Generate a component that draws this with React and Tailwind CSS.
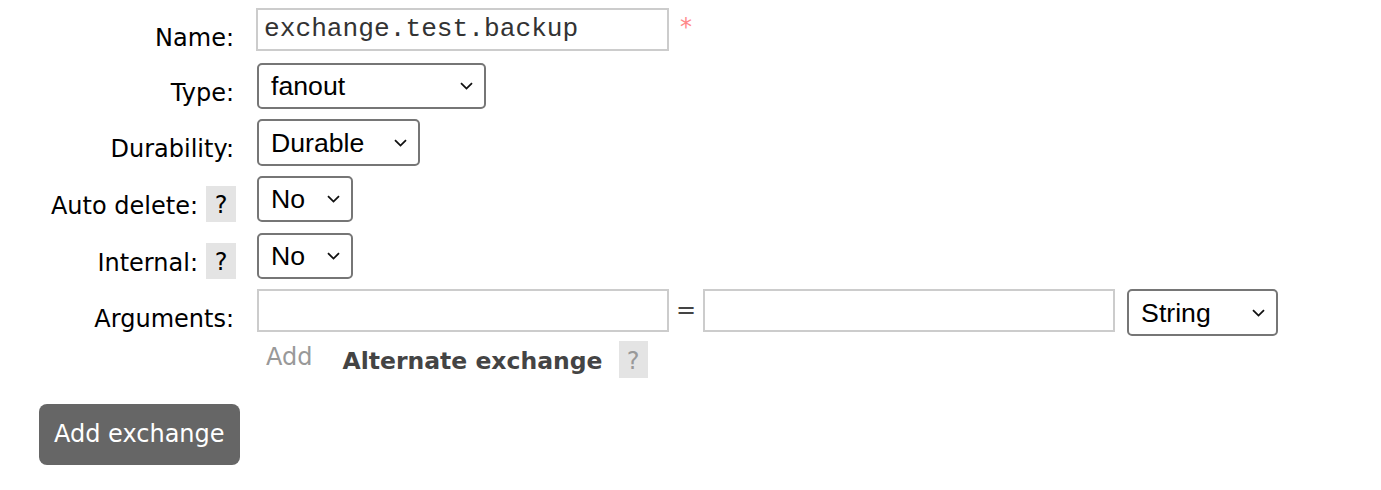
const LABEL = "text-[24px] leading-[27px] text-black";
const FONT = { fontFamily: '"DejaVu Sans", Verdana, sans-serif' };

function Chevron() {
  return (
    <svg width="13" height="8" viewBox="0 0 13 8" fill="none" className="shrink-0">
      <path d="M1 1.2 L6.5 6.6 L12 1.2" stroke="#111" strokeWidth="1.8" />
    </svg>
  );
}

function Select({ value, width, height = "h-[46px]" }) {
  return (
    <div
      className={`${width} ${height} flex items-center justify-between pl-[12px] pr-[11px] border-2 border-[#767676] rounded-[5px] bg-white text-[26.67px] text-black`}
      style={{ fontFamily: '"Liberation Sans", Arial, sans-serif' }}
    >
      <span>{value}</span>
      <Chevron />
    </div>
  );
}

function Help() {
  return (
    <div className="w-[30px] h-[36px] flex justify-center pt-[6px] bg-[#e4e4e4] text-[24px] leading-[27px] text-black">
      ?
    </div>
  );
}

function Row({ label, help, className, children }) {
  return (
    <div className={`flex items-start ${className}`}>
      <div className="w-[197px] flex justify-end items-start">
        <span className={`${LABEL} pt-[17px] ${help ? "" : "pr-[2px]"}`}>{label}</span>
        {help && (
          <div className="ml-[8px] mt-[10px]">
            <Help />
          </div>
        )}
      </div>
      <div className="ml-[21px] flex items-start">{children}</div>
    </div>
  );
}

function TextInput({ value = "", width = "w-[412px]" }) {
  return (
    <div
      className={`${width} h-[43px] border-2 border-[#ccc] bg-white flex items-center pl-[6px] text-[26.2px] text-[#333]`}
      style={{ fontFamily: '"Liberation Mono", "Courier New", monospace' }}
    >
      {value}
    </div>
  );
}

export default function App() {
  return (
    <div className="w-[1381px] h-[490px] bg-white pl-[39px] pt-[8px]" style={FONT}>
      <Row label="Name:" className="h-[43px]">
        <div className="-ml-[1px] flex items-start">
          <TextInput value="exchange.test.backup" width="w-[413px]" />
          <span className="ml-[11px] mt-[6px] text-[24px] leading-[27px] text-[#f88]">*</span>
        </div>
      </Row>

      <Row label="Type:" className="mt-[12px] h-[46px]">
        <Select value="fanout" width="w-[229px]" />
      </Row>

      <Row label="Durability:" className="mt-[10px] h-[47px]">
        <Select value="Durable" width="w-[163px]" height="h-[47px]" />
      </Row>

      <Row label="Auto delete:" help className="mt-[10px] h-[46px]">
        <Select value="No" width="w-[96px]" />
      </Row>

      <Row label="Internal:" help className="mt-[11px] h-[46px]">
        <Select value="No" width="w-[96px]" />
      </Row>

      <Row label="Arguments:" className="mt-[10px] h-[47px]">
        <TextInput />
        <span className="mx-[7px] text-[24px] leading-[43px] text-[#444]">=</span>
        <TextInput />
        <div className="ml-[12px]">
          <Select value="String" width="w-[151px]" height="h-[47px]" />
        </div>
      </Row>

      <div className="mt-[5px] h-[37px] flex items-start pl-[227px]">
        <span className="pt-[3px] text-[24px] leading-[27px] text-[#999]">Add</span>
        <span className="ml-[30px] pt-[7px] text-[23.5px] leading-[27px] font-bold text-[#444]">
          Alternate exchange
        </span>
        <div className="ml-[16px] w-[29px] h-[37px] flex justify-center pt-[7px] bg-[#e4e4e4] text-[24px] leading-[27px] text-[#999]">
          ?
        </div>
      </div>

      <button
        className="mt-[26px] h-[61px] px-[15px] rounded-[8px] bg-[#666] text-white text-[24px] leading-[27px]"
        style={FONT}
      >
        Add exchange
      </button>
    </div>
  );
}
